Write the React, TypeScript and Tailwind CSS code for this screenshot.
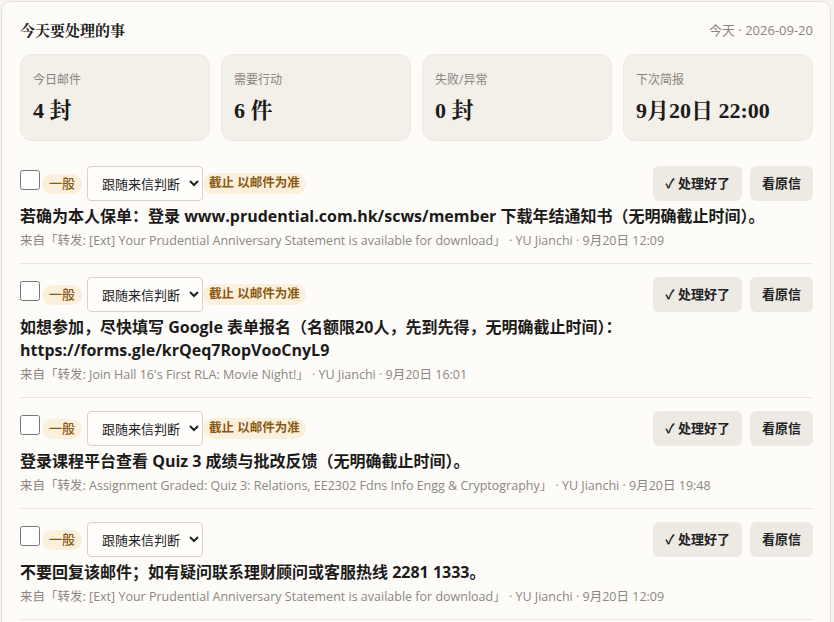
import React from 'react'

// ─── Datos ────────────────────────────────────────────────────────────────

const STATS = [
  { label: '今日邮件', value: '4 封' },
  { label: '需要行动', value: '6 件' },
  { label: '失败/异常', value: '0 封' },
  { label: '下次简报', value: '9月20日 22:00' },
]

type Task = {
  title: string
  subject: string
  time: string
  deadline: boolean
}

const TASKS: Task[] = [
  {
    title: '若确为本人保单：登录 www.prudential.com.hk/scws/member 下载年结通知书（无明确截止时间）。',
    subject: '转发: [Ext] Your Prudential Anniversary Statement is available for download',
    time: '9月20日 12:09',
    deadline: true,
  },
  {
    title: '如想参加，尽快填写 Google 表单报名（名额限20人，先到先得，无明确截止时间）：https://forms.gle/krQeq7RopVooCnyL9',
    subject: "转发: Join Hall 16's First RLA: Movie Night!",
    time: '9月20日 16:01',
    deadline: true,
  },
  {
    title: '登录课程平台查看 Quiz 3 成绩与批改反馈（无明确截止时间）。',
    subject: '转发: Assignment Graded: Quiz 3: Relations, EE2302 Fdns Info Engg & Cryptography',
    time: '9月20日 19:48',
    deadline: true,
  },
  {
    title: '不要回复该邮件；如有疑问联系理财顾问或客服热线 2281 1333。',
    subject: '转发: [Ext] Your Prudential Anniversary Statement is available for download',
    time: '9月20日 12:09',
    deadline: false,
  },
]

const SANS = "font-['Open_Sans','Noto_Sans_CJK_SC',sans-serif]"
const SERIF = "font-['Liberation_Serif','Noto_Serif_CJK_SC','Noto_Sans_CJK_SC',serif]"

// ─── Componentes ──────────────────────────────────────────────────────────

function TaskRow({ task }: { task: Task }) {
  return (
    <div className="border-b border-[#ebe7e0] py-[13px]">
      <div className="flex items-center justify-between">
        <div className="flex items-center">
          <input
            type="checkbox"
            className="m-0 h-5 w-5 -translate-y-1 accent-[#6b5a3e]"
          />
          <span className="ml-[2px] flex h-5 items-center rounded-full bg-[#fbf0dc] px-[7px] text-[13px] font-medium text-[#8a5a14]">
            一般
          </span>
          <select className="ml-[5px] h-[35px] w-[116px] rounded-[4px] border border-[#d8d2c8] bg-[#fffefb] pl-2.5 pr-1 text-[13px] text-[#222]">
            <option>跟随来信判断</option>
          </select>
          {task.deadline && (
            <span className="flex h-[21px] items-center rounded-full bg-[#fbf0dc] px-[6px] text-[12.5px] font-bold text-[#8a5a14]">
              截止 以邮件为准
            </span>
          )}
        </div>
        <div className="flex items-center gap-2">
          <button className="h-[35px] rounded-md bg-[#ede9e3] px-3 text-[13px] font-semibold text-[#222]">
            ✓ 处理好了
          </button>
          <button className="h-[35px] rounded-md bg-[#ede9e3] px-3 text-[13px] font-semibold text-[#222]">
            看原信
          </button>
        </div>
      </div>
      <div className="mt-1 text-[16px] font-bold leading-[23px] text-[#1c1b19]">
        {task.title}
      </div>
      <div className="mt-1 text-[12.5px] leading-[18px] text-[#8c8780]">
        来自「{task.subject}」 · YU Jianchi · {task.time}
      </div>
    </div>
  )
}

export default function App() {
  return (
    <div className={`${SANS} min-h-screen bg-[#f5f3ee] pl-px pt-px`}>
      <div className="h-[640px] w-[830px] overflow-hidden rounded-[10px] border border-[#e6e2da] bg-[#fdfcf9] pl-[18px] pr-[17px] pt-[18px]">
        {/* ── Cabecera ────────────────────────────────────────── */}
        <div className="flex items-center justify-between">
          <h1 className={`${SERIF} text-[15px] font-bold leading-[22px] text-[#1c1b19]`}>
            今天要处理的事
          </h1>
          <span className="text-[13px] text-[#8a847c]">今天 · 2026-09-20</span>
        </div>

        {/* ── Resumen ─────────────────────────────────────────── */}
        <div className="mt-3 grid grid-cols-4 gap-[11px]">
          {STATS.map((s) => (
            <div
              key={s.label}
              className="h-[87px] rounded-xl border border-[#ece8e0] bg-[#f3f0ea] px-3 pt-4"
            >
              <div className="text-[12px] leading-[18px] text-[#8a847c]">{s.label}</div>
              <div className={`${SERIF} mt-2 text-[22px] font-bold leading-[28px] text-[#1c1b19]`}>
                {s.value}
              </div>
            </div>
          ))}
        </div>

        {/* ── Lista de tareas ─────────────────────────────────── */}
        <div className="mt-3">
          {TASKS.map((t, i) => (
            <TaskRow key={i} task={t} />
          ))}
        </div>
      </div>
    </div>
  )
}
